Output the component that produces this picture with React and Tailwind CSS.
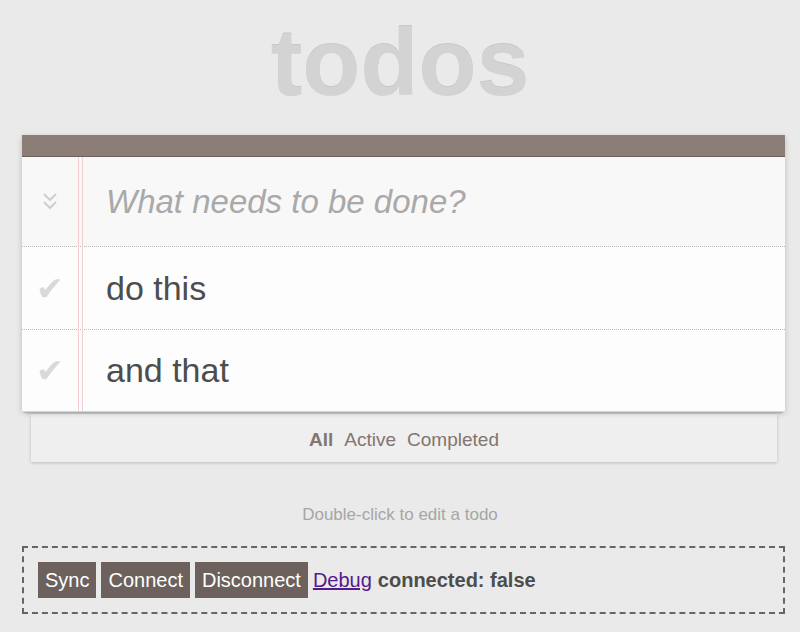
import React from 'react';

const todos = [
  { text: 'do this', h: 'h-[83px] border-b border-dotted border-[#bbb]' },
  { text: 'and that', h: 'h-[81px]' },
];

const Check = () => (
  <span className="w-[56px] flex justify-center text-[33px] leading-none text-[#d9d9d9]">✔</span>
);

export default function App() {
  return (
    <div className="min-h-[632px] bg-[#eaeaea] font-['Liberation_Sans',Arial,sans-serif] overflow-hidden">
      <h1 className="h-[135px] pt-[7px] text-center text-[95px] leading-[110px] font-bold text-[#d3d3d3] [text-shadow:0_-1px_0_rgba(0,0,0,0.15)]">
        todos
      </h1>

      <section className="mx-[22px] w-[763px] relative bg-white shadow-[0_2px_6px_rgba(0,0,0,0.2)]">
        <div className="h-[22px] bg-[#8d7d77] border-b border-[#6c615c]" />
        <div className="h-[90px] flex items-center bg-[#f8f8f8] border-b border-dotted border-[#bbb]">
          <span className="w-[56px] flex justify-center">
            <svg width="16" height="22" viewBox="0 0 16 22" fill="none" stroke="#cfcfcf" strokeWidth="2">
              <path d="M2 3 L8 9 L14 3" />
              <path d="M2 11 L8 17 L14 11" />
            </svg>
          </span>
          <span className="pl-[28px] text-[33px] italic text-[#a9a9a9]">What needs to be done?</span>
        </div>
        {todos.map((t) => (
          <div key={t.text} className={`${t.h} flex items-center bg-[#fdfdfd]`}>
            <Check />
            <span className="pl-[28px] text-[34px] text-[#4d4d4d]">{t.text}</span>
          </div>
        ))}
        <div className="absolute left-[56px] top-[22px] bottom-0 w-[5px] border-x border-[#f3cfd2]" />
      </section>
      <div className="mx-[24px] w-[759px] h-[2px] bg-[#f4f4f4] border-b border-[#c8c8c8]" />
      <div className="mx-[26px] w-[755px] h-[1px] bg-[#d0d0d0]" />

      <footer className="mx-[31px] w-[746px] h-[48px] pt-[4px] flex items-center justify-center gap-[11px] bg-[#efefef] text-[19px] text-[#83756f] shadow-[0_1px_3px_rgba(0,0,0,0.2)]">
        <span className="font-bold">All</span>
        <span>Active</span>
        <span>Completed</span>
      </footer>

      <p className="mt-[44px] text-center text-[17px] leading-[18px] text-[#a6a6a6]">
        Double-click to edit a todo
      </p>

      <div className="mt-[22px] mx-[22px] w-[763px] h-[68px] border-2 border-dashed border-[#666] pl-[14px] pt-[14px] flex items-start gap-[5px] text-[20px]">
        <button className="h-[36px] px-[7px] bg-[#6c615c] text-white">Sync</button>
        <button className="h-[36px] px-[7px] bg-[#6c615c] text-white">Connect</button>
        <button className="h-[36px] px-[7px] bg-[#6c615c] text-white">Disconnect</button>
        <span className="h-[36px] flex items-center gap-[6px]">
          <a href="#" className="text-[#551a8b] underline">Debug</a>
          <b className="text-[#4d4d4d]">connected: false</b>
        </span>
      </div>
    </div>
  );
}
